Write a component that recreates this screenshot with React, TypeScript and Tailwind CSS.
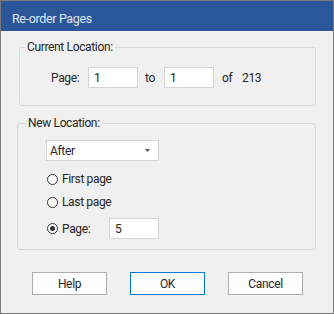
import { ReactNode } from "react";

function Radio({ checked = false }: { checked?: boolean }) {
  return (
    <span className="flex h-[11px] w-[11px] items-center justify-center rounded-full border border-[#333333] bg-white">
      {checked && <span className="h-[5px] w-[5px] rounded-full bg-[#333333]" />}
    </span>
  );
}

function Field({ value, className = "" }: { value: string; className?: string }) {
  return (
    <div className={"flex h-[21px] w-[50px] items-center border border-[#d5d5d5] bg-white pl-[5px] " + className}>
      {value}
    </div>
  );
}

function Button({ children, primary = false }: { children: ReactNode; primary?: boolean }) {
  return (
    <button
      className={
        "flex h-[23px] w-[75px] items-center justify-center border bg-[#fdfdfd] " +
        (primary ? "border-[#0078d7]" : "border-[#adadad]")
      }
    >
      {children}
    </button>
  );
}

export default function App() {
  return (
    <div className="flex h-[314px] w-[334px] flex-col border border-[#7a7a7a] bg-[#f0f0f0] font-['Roboto',sans-serif] text-[12px] leading-4 tracking-[-0.35px] text-[#262626]">
      {/* title bar */}
      <div className="flex h-[30px] items-center bg-[#2b579a] pl-[11px] pt-[5px] text-[12.5px] text-[#dfe6f1]">
        Re-order Pages
      </div>

      {/* current location */}
      <fieldset className="ml-[18px] mr-[17px] mt-[8px] rounded-[3px] border border-[#d9d9d9] pb-[17px]">
        <legend className="ml-[5px] px-[2px]">Current Location:</legend>
        <div className="mt-[12px] flex items-center pl-[31px]">
          <span className="w-[37px]">Page:</span>
          <Field value="1" />
          <span className="w-[26px] pl-[7px]">to</span>
          <Field value="1" />
          <span className="w-[28px] pl-[8px]">of</span>
          <span>213</span>
        </div>
      </fieldset>

      {/* new location */}
      <fieldset className="ml-[16px] mr-[17px] mt-[9px] rounded-[3px] border border-[#d9d9d9] pb-[10px] pl-[28px]">
        <legend className="-ml-[20px] px-[2px]">New Location:</legend>
        <div className="mt-[9px] flex h-[21px] w-[113px] items-center justify-between border border-[#d5d5d5] bg-white pl-[3px] pr-[8px]">
          <span>After</span>
          <svg width="5" height="3" viewBox="0 0 5 3">
            <path d="M0 0h5L2.5 3z" fill="#555555" />
          </svg>
        </div>
        <div className="mt-[9px] flex h-[18px] items-center gap-[4px] pl-[1px]">
          <Radio />
          <span>First page</span>
        </div>
        <div className="mt-[5px] flex h-[18px] items-center gap-[4px] pl-[1px]">
          <Radio />
          <span>Last page</span>
        </div>
        <div className="mt-[7px] flex items-center pl-[1px]">
          <Radio checked />
          <span className="w-[51px] pl-[4px]">Page:</span>
          <Field value="5" />
        </div>
      </fieldset>

      {/* buttons */}
      <div className="ml-[31px] mt-[22px] flex gap-[23px]">
        <Button>Help</Button>
        <Button primary>OK</Button>
        <Button>Cancel</Button>
      </div>
    </div>
  );
}
